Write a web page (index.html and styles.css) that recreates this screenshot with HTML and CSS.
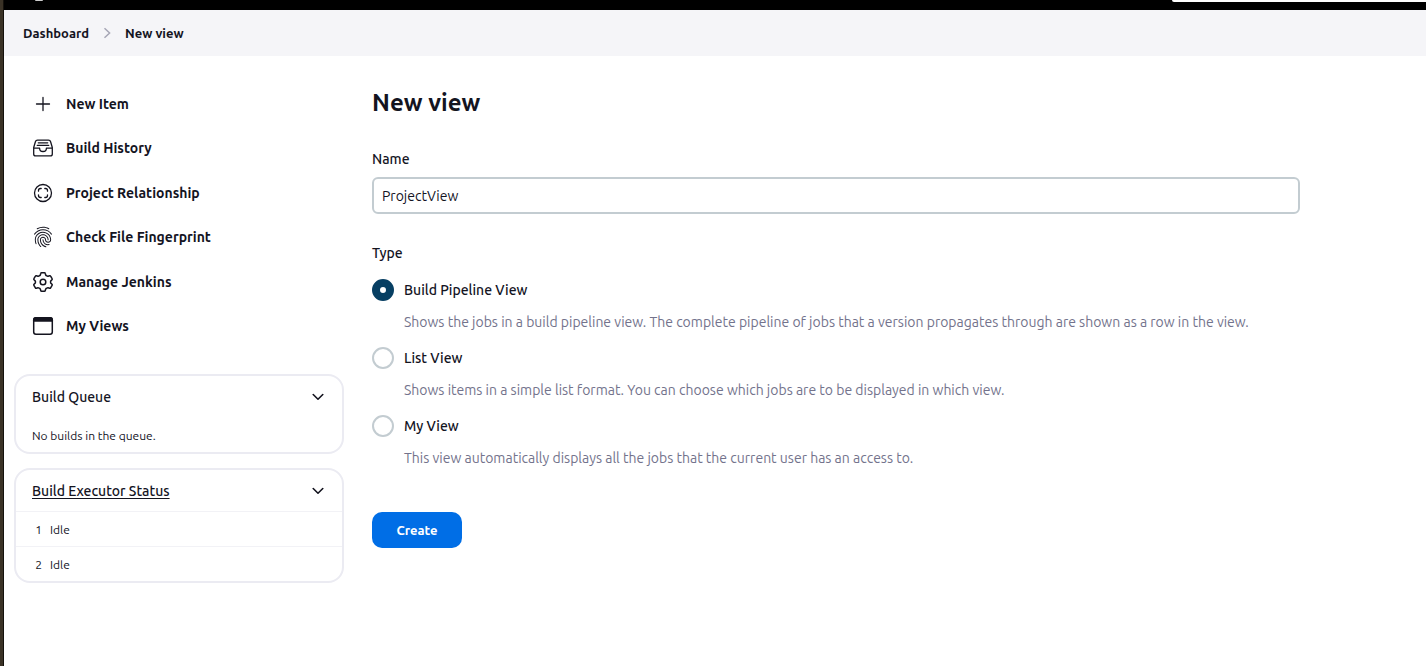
FILE: index.html
```
<!DOCTYPE html>
<html lang="en">
<head>
<meta charset="utf-8">
<title>New view - Jenkins</title>
<link rel="stylesheet" href="styles.css">
</head>
<body>
<div class="page">
  <header class="topbar">
    <span class="topbar-logo"></span>
    <span class="topbar-search"></span>
  </header>

  <nav class="breadcrumbs" aria-label="Breadcrumb">
    <a href="#">Dashboard</a>
    <svg class="crumb-arrow" viewBox="0 0 8 12" aria-hidden="true"><path d="M1.5 1.2 6.6 6l-5.1 4.8"/></svg>
    <a href="#">New view</a>
  </nav>

  <div class="layout">
    <aside class="sidebar">
      <nav class="tasks" aria-label="Tasks">
        <a class="task" href="#">
          <svg class="icon" viewBox="0 0 22 22" aria-hidden="true"><path class="thin" d="M11 4.500v13M4.500 11h13"/></svg>
          New Item
        </a>
        <a class="task" href="#">
          <svg class="icon" viewBox="0 0 22 22" aria-hidden="true"><path class="thin" d="M1.700 10.500 3.400 4.700A2.200 2.200 0 0 1 5.500 3.100H16.500A2.200 2.200 0 0 1 18.600 4.700L20.300 10.500V16.900A2 2 0 0 1 18.300 18.900H3.700A2 2 0 0 1 1.700 16.900ZM1.700 11.200H7.600C7.600 13.200 9 14.500 11 14.500S14.400 13.200 14.400 11.200H20.300M6.300 5.800H15.700M5.300 8.400H16.700"/></svg>
          Build History
        </a>
        <a class="task" href="#">
          <svg class="icon" viewBox="0 0 22 22" aria-hidden="true"><g class="thin"><circle cx="11" cy="11" r="8.500"/><path d="M6.500 9.200V8.500a2 2 0 0 1 2-2h.7M12.800 6.500h.7a2 2 0 0 1 2 2v.7M15.500 12.800v.7a2 2 0 0 1-2 2h-.7M9.200 15.500h-.7a2 2 0 0 1-2-2v-.7"/></g></svg>
          Project Relationship
        </a>
        <a class="task" href="#">
          <svg class="icon" viewBox="0 0 512 512" aria-hidden="true"><path class="print" d="M390.420 75.280a10.450 10.450 0 0 1-5.320-1.440C340.720 50.080 302.350 40 256.350 40c-45.770 0-89.230 11.280-128.760 33.840C122 77 115.110 74.800 111.870 69a12.400 12.400 0 0 1 4.630-16.320A281.810 281.810 0 0 1 256.350 16c49.230 0 92.230 11.280 139.390 36.480a12 12 0 0 1 4.850 16.080 11.300 11.300 0 0 1-10.170 6.720zm-330.790 126a11.730 11.730 0 0 1-6.700-2.160 12.260 12.260 0 0 1-2.780-16.800c22.890-33.600 52-60 86.690-78.480 72.580-38.840 165.440-39.120 238.240-.240 34.680 18.480 63.800 44.640 86.690 78a12.290 12.290 0 0 1-2.780 16.800 11.260 11.260 0 0 1-16.180-2.880c-20.800-30.240-47.150-54-78.360-70.560-66.340-35.280-151.180-35.280-217.290.240-31.440 16.800-57.790 40.800-78.590 71a10 10 0 0 1-8.940 5.080zM204.100 491a10.660 10.660 0 0 1-8.090-3.600C175.900 466.480 165 453 149.550 424c-16-29.520-24.270-65.520-24.270-104.160 0-71.280 58.710-129.360 130.840-129.360S387 248.560 387 319.840a11.560 11.560 0 1 1-23.110 0c0-58.080-48.320-105.360-107.720-105.360S148.400 261.760 148.400 319.840c0 34.560 7.390 66.480 21.490 92.400 14.800 27.600 25 39.360 42.770 58.080a12.670 12.670 0 0 1 0 17 12.440 12.440 0 0 1-8.560 3.680zM369.850 446.560c-27.510 0-51.780-7.200-71.660-21.360a129.100 129.100 0 0 1-55-105.360 11.570 11.570 0 1 1 23.120 0 104.280 104.280 0 0 0 44.840 85.440c16.410 11.520 35.600 17 58.720 17a147.410 147.410 0 0 0 24-2.400c6.240-1.200 12.250 3.120 13.400 9.840a11.920 11.920 0 0 1-9.470 13.920 152.280 152.280 0 0 1-27.950 2.920zM323.380 496a13 13 0 0 1-3-.480c-36.760-10.560-60.800-24.720-86-50.400-32.370-33.360-50.160-77.760-50.160-125.280 0-38.880 31.900-70.560 71.190-70.560s71.200 31.680 71.200 70.560c0 25.680 21.500 46.560 48.080 46.560s48.080-20.880 48.080-46.560c0-90.480-75.130-163.920-167.590-163.920-65.650 0-125.750 37.920-152.790 96.720-9 19.440-13.640 42.240-13.640 67.200 0 18.720 1.610 48.240 15.480 86.640 2.320 6.240-.690 13.200-6.700 15.360a11.340 11.340 0 0 1-14.790-7 276.390 276.390 0 0 1-16.880-95c0-28.800 5.320-55 15.720-77.760 30.750-67.200 98.940-110.640 173.600-110.640 105.180 0 190.710 84.240 190.710 187.920 0 38.880-32 70.560-71.200 70.560s-71.200-31.680-71.200-70.560c0-25.680-21.490-46.560-48.070-46.560s-48.080 20.880-48.080 46.560c0 41 15.260 79.440 43.230 108.240 22 22.560 43 35 75.590 44.400 6.240 1.680 9.710 8.400 8.090 14.640a11.390 11.390 0 0 1-10.870 9.360z"/></svg>
          Check File Fingerprint
        </a>
        <a class="task" href="#">
          <svg class="icon" viewBox="0 0 22 22" aria-hidden="true"><circle cx="11" cy="11" r="2.800"/><path d="M9.600 1.700h2.800a.8.8 0 0 1 .8.600l.5 1.700a.8.8 0 0 0 .4.500l1.300.7a.8.8 0 0 0 .6.100l1.700-.5a.8.8 0 0 1 .9.400l1.500 2.500a.8.8 0 0 1-.1 1l-1.200 1.200a.8.8 0 0 0-.2.500v1.200a.8.8 0 0 0 .2.500l1.200 1.200a.8.8 0 0 1 .1 1l-1.500 2.500a.8.8 0 0 1-.9.400l-1.700-.5a.8.8 0 0 0-.6.100l-1.300.7a.8.8 0 0 0-.4.500l-.5 1.700a.8.8 0 0 1-.8.600H9.600a.8.8 0 0 1-.8-.6l-.5-1.700a.8.8 0 0 0-.4-.5l-1.300-.7a.8.8 0 0 0-.6-.1l-1.700.5a.8.8 0 0 1-.9-.4l-1.500-2.500a.8.8 0 0 1 .1-1l1.200-1.200a.8.8 0 0 0 .2-.5v-1.200a.8.8 0 0 0-.2-.5L2 8.700a.8.8 0 0 1-.1-1l1.500-2.500a.8.8 0 0 1 .9-.4l1.700.5a.8.8 0 0 0 .6-.1l1.300-.7a.8.8 0 0 0 .4-.5l.5-1.700a.8.8 0 0 1 .8-.6z"/></svg>
          Manage Jenkins
        </a>
        <a class="task" href="#">
          <svg class="icon" viewBox="0 0 22 22" aria-hidden="true"><rect x="1.700" y="2.700" width="18.600" height="16.600" rx="2.200"/><path class="solid" d="M1.700 6V4.900a2.200 2.200 0 0 1 2.200-2.200h14.200a2.200 2.200 0 0 1 2.200 2.200V6z"/></svg>
          My Views
        </a>
      </nav>

      <section class="pane">
        <div class="pane-head">
          <h2>Build Queue</h2>
          <button class="pane-toggle" type="button" aria-label="Collapse build queue"><svg viewBox="0 0 12 8" aria-hidden="true"><path d="M1.200 1.500 6 6.200l4.800-4.700"/></svg></button>
        </div>
        <p class="pane-empty">No builds in the queue.</p>
      </section>

      <section class="pane">
        <div class="pane-head">
          <h2><a href="#">Build Executor Status</a></h2>
          <button class="pane-toggle" type="button" aria-label="Collapse executor status"><svg viewBox="0 0 12 8" aria-hidden="true"><path d="M1.200 1.500 6 6.200l4.800-4.700"/></svg></button>
        </div>
        <table class="executors">
          <tr><td class="num">1</td><td>Idle</td></tr>
          <tr><td class="num">2</td><td>Idle</td></tr>
        </table>
      </section>
    </aside>

    <main class="main">
      <h1>New view</h1>
      <form class="form">
        <label class="form-label" for="name">Name</label>
        <input class="text-input" id="name" type="text" value="ProjectView">

        <fieldset class="types">
          <legend class="form-label">Type</legend>
          <div class="choice">
            <input type="radio" name="mode" id="pipeline" checked>
            <label for="pipeline">Build Pipeline View</label>
            <p>Shows the jobs in a build pipeline view. The complete pipeline of jobs that a version propagates through are shown as a row in the view.</p>
          </div>
          <div class="choice">
            <input type="radio" name="mode" id="list">
            <label for="list">List View</label>
            <p>Shows items in a simple list format. You can choose which jobs are to be displayed in which view.</p>
          </div>
          <div class="choice">
            <input type="radio" name="mode" id="my">
            <label for="my">My View</label>
            <p>This view automatically displays all the jobs that the current user has an access to.</p>
          </div>
        </fieldset>

        <button class="create" type="submit">Create</button>
      </form>
    </main>
  </div>
</div>
</body>
</html>
```
FILE: styles.css
```
* {
  box-sizing: border-box;
}

body {
  margin: 0;
  border-left: 3px solid #3a3226;
  background: #fff;
  color: #14141f;
  font-family: Ubuntu, "Noto Sans", "Open Sans", sans-serif;
  font-size: 14px;
  line-height: 20px;
}

h1, h2, p {
  margin: 0;
}

a {
  color: inherit;
  text-decoration: none;
}

button {
  padding: 0;
  border: 0;
  background: none;
  color: inherit;
  font-family: inherit;
}

.page {
  min-height: 100vh;
  border-left: 1px solid #14110c;
}

.topbar {
  display: flex;
  justify-content: space-between;
  height: 10px;
  padding-left: 31px;
  background: #000;
}

.topbar-logo {
  width: 8px;
  height: 1px;
  border-radius: 0 0 4px 4px;
  background: #ccc;
}

.topbar-search {
  width: 254px;
  height: 2px;
  border-radius: 0 0 0 2px;
  background: #fff;
}

.breadcrumbs {
  display: flex;
  align-items: center;
  gap: 14px;
  height: 46px;
  padding-left: 19px;
  background: #f5f5f8;
  font-size: 13px;
  font-weight: 600;
}

.crumb-arrow {
  width: 8px;
  height: 12px;
  fill: none;
  stroke: #a6a6b5;
  stroke-width: 1.500;
}

.layout {
  display: grid;
  grid-template-columns: 330px minmax(0, 1fr);
  column-gap: 28px;
  padding: 25px 126px 25px 10px;
}

.tasks {
  display: grid;
  align-content: space-between;
  min-height: 267px;
  margin-bottom: 26px;
}

.task {
  display: flex;
  align-items: center;
  gap: 12px;
  min-height: 44px;
  padding: 1px 0 0 18px;
  font-weight: 600;
}

.icon {
  width: 22px;
  height: 22px;
  fill: none;
  stroke: currentColor;
  stroke-width: 1.500;
  stroke-linecap: round;
  stroke-linejoin: round;
}

.icon .thin {
  stroke-width: 1.300;
}

.icon .solid {
  fill: currentColor;
}

.icon .print {
  fill: currentColor;
  stroke: none;
}

.pane {
  margin-bottom: 14px;
  border: 2px solid #ebebf2;
  border-radius: 16px;
  overflow: hidden;
}

.pane-head {
  display: flex;
  align-items: center;
  justify-content: space-between;
  height: 41px;
  padding: 0 16px;
}

.pane-head h2 {
  font-size: 14px;
  font-weight: 550;
}

.pane-head h2 a {
  text-decoration: underline;
  text-underline-offset: 2px;
}

.pane-toggle {
  display: grid;
  place-items: center;
  width: 16px;
  height: 16px;
}

.pane-toggle svg {
  width: 12px;
  height: 8px;
  fill: none;
  stroke: currentColor;
  stroke-width: 1.600;
  stroke-linecap: round;
  stroke-linejoin: round;
}

.pane-empty {
  padding: 9px 16px 6px;
  font-size: 12px;
}

.executors {
  width: 100%;
  border-spacing: 0;
  font-size: 12px;
}

.executors td {
  height: 35px;
  padding: 1px 0 0;
  border-top: 1px solid #f2f2f6;
}

.executors .num {
  width: 34px;
  padding: 1px 8px 0 16px;
  text-align: right;
}

h1 {
  margin: 8px 0 32px;
  font-size: 24px;
  font-weight: 700;
  line-height: 28px;
}

.form-label {
  display: block;
  padding: 0;
  font-weight: 550;
}

.text-input {
  display: block;
  width: 100%;
  height: 37px;
  margin: 8px 0 29px;
  padding: 0 8px;
  border: 2px solid #c3ccd1;
  border-radius: 6px;
  background: #fff;
  color: inherit;
  font: inherit;
}

.types {
  display: grid;
  gap: 15px;
  margin: 0 0 44px;
  padding: 0;
  border: 0;
}

.types .form-label {
  margin-bottom: 16px;
}

.choice {
  display: grid;
  grid-template-columns: 22px minmax(0, 1fr);
  column-gap: 10px;
  row-gap: 11px;
  align-items: center;
}

.choice input {
  width: 22px;
  height: 22px;
  margin: 0;
  border: 2px solid #c3ccd1;
  border-radius: 50%;
  appearance: none;
}

.choice input:checked {
  border: 8px solid #073f63;
}

.choice label {
  font-weight: 550;
}

.choice p {
  grid-column: 2;
  color: #73738c;
}

.create {
  min-width: 90px;
  height: 36px;
  padding: 0 24px;
  border-radius: 10px;
  background: #006ee6;
  color: #fff;
  font-size: 13px;
  font-weight: 700;
}
```
